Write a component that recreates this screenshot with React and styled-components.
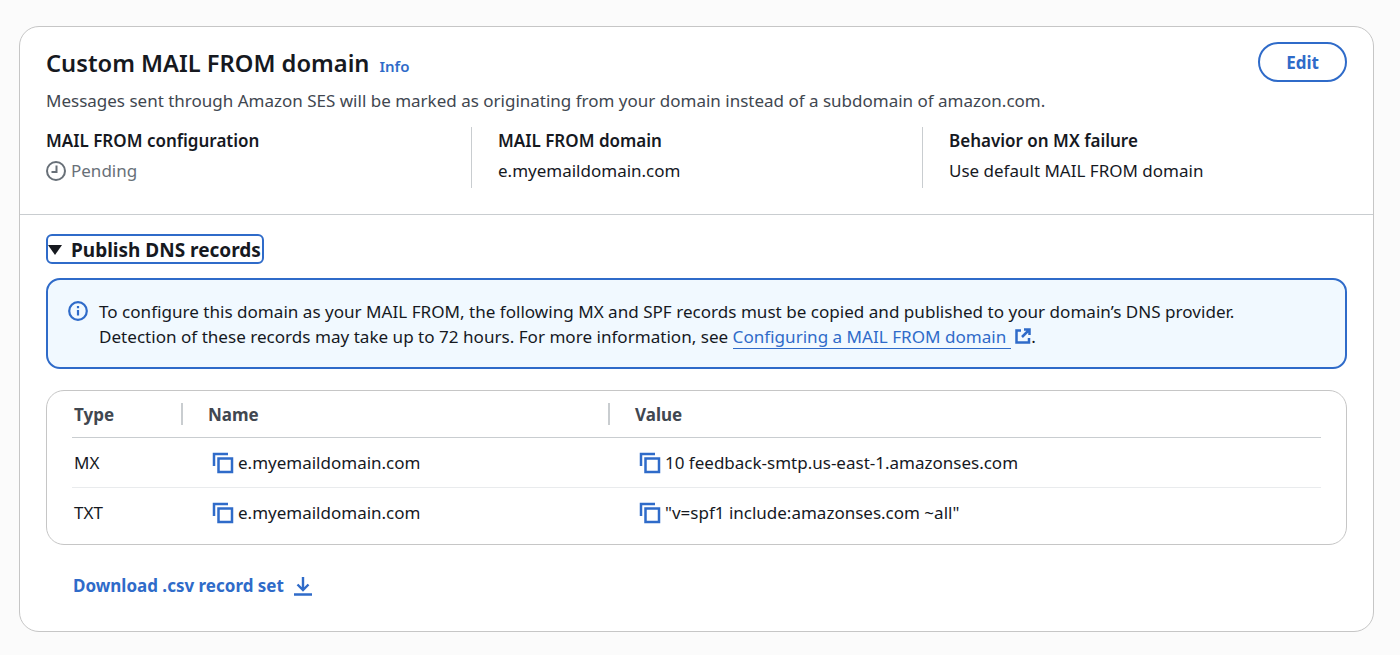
import React from "react";
import styled, { createGlobalStyle } from "styled-components";

const GlobalStyle = createGlobalStyle`
  html, body {
    margin: 0;
    padding: 0;
    background: #fbfbfb;
    font-family: "Noto Sans", "Open Sans", sans-serif;
    color: #16191f;
  }
`;

const blue = "#2f6bc9";

const Page = styled.div`
  width: 1400px;
  height: 655px;
  padding: 26px 26px 0 19px;
  box-sizing: border-box;
  overflow: hidden;
`;

const Card = styled.section`
  width: 1355px;
  height: 606px;
  box-sizing: border-box;
  background: #fff;
  border: 1.5px solid #c6c6c6;
  border-radius: 20px;
`;

const Top = styled.header`
  height: 188px;
  box-sizing: border-box;
  padding: 15px 26px 0 26px;
  border-bottom: 1px solid #c9cdd0;
`;

const TitleRow = styled.div`
  display: flex;
  justify-content: space-between;
  align-items: flex-start;
`;

const TitleWrap = styled.div`
  display: flex;
  align-items: baseline;
  gap: 10px;
`;

const Title = styled.h2`
  margin: 0;
  font-size: 23.7px;
  line-height: 42px;
  font-weight: 600;
  color: #16191f;
`;

const InfoLink = styled.a`
  font-size: 15px;
  font-weight: 600;
  color: ${blue};
`;

const EditButton = styled.button`
  width: 89px;
  height: 40px;
  box-sizing: border-box;
  border: 2.5px solid ${blue};
  border-radius: 20px;
  background: #fff;
  color: ${blue};
  font-family: inherit;
  font-size: 17px;
  font-weight: 700;
`;

const Description = styled.p`
  margin: 5px 0 0;
  font-size: 17px;
  line-height: 24px;
  color: #414750;
`;

const Columns = styled.div`
  display: grid;
  grid-template-columns: 425px 451px 1fr;
  margin-top: 14px;
`;

const Column = styled.div`
  height: 61px;
  padding-left: ${({ $first }) => ($first ? "0" : "26px")};
  border-left: ${({ $first }) => ($first ? "0" : "1px solid #c9cdd0")};
`;

const Label = styled.div`
  font-size: 17px;
  line-height: 28px;
  font-weight: 600;
  color: #16191f;
`;

const Value = styled.div`
  display: flex;
  align-items: center;
  gap: 5px;
  font-size: 17px;
  line-height: 32px;
  color: ${({ $muted }) => ($muted ? "#687078" : "#16191f")};
`;

const Body = styled.div`
  padding: 19px 26px 0 26px;
`;

const Toggle = styled.div`
  display: inline-flex;
  align-items: center;
  gap: 8px;
  height: 30px;
  box-sizing: border-box;
  padding: 2px 0 0 0;
  width: 218px;
  border: 2px solid ${blue};
  border-radius: 6px;
  font-size: 19px;
  font-weight: 700;
  color: #16191f;
  white-space: nowrap;
`;

const Alert = styled.div`
  display: flex;
  gap: 11px;
  margin-top: 14px;
  height: 91px;
  box-sizing: border-box;
  padding: 19px 0 0 20px;
  border: 2px solid ${blue};
  border-radius: 14px;
  background: #f1f9ff;
`;

const AlertIcon = styled.span`
  flex: none;
  margin-top: 2px;
  height: 22px;
`;

const AlertText = styled.div`
  font-size: 17.08px;
  line-height: 25px;
  color: #16191f;
  white-space: nowrap;
`;

const DocLink = styled.a`
  color: ${blue};
  border-bottom: 1px solid ${blue};
  padding-right: 5px;
`;

const ExternalIcon = styled.svg`
  margin-left: 4px;
  vertical-align: -1px;
`;

const TableBox = styled.div`
  margin-top: 21px;
  height: 155px;
  box-sizing: border-box;
  padding: 0 25px;
  border: 1.5px solid #c6c6c6;
  border-radius: 18px;
`;

const Row = styled.div`
  display: grid;
  grid-template-columns: 128px 427px 1fr;
  height: ${({ $h }) => $h}px;
  align-items: center;
  border-bottom: ${({ $line }) => ($line ? `1px solid ${$line}` : "0")};
  font-size: 17px;
  color: #16191f;
`;

const Heading = styled.div`
  position: relative;
  height: 100%;
  display: flex;
  align-items: center;
  padding-left: ${({ $first }) => ($first ? "2px" : "8px")};
  font-weight: 700;
  color: #414750;

  &:not(:first-child)::before {
    content: "";
    position: absolute;
    left: -19px;
    top: 12px;
    height: 22px;
    width: 2px;
    background: #c9cdd0;
  }
`;

const Cell = styled.div`
  display: flex;
  align-items: center;
  gap: 3px;
  padding-left: ${({ $first }) => ($first ? "2px" : "13px")};
  white-space: nowrap;
`;

const CopySvg = styled.svg`
  margin-left: -1px;
  margin-right: 1px;
`;

const DownloadLink = styled.a`
  display: inline-flex;
  align-items: center;
  gap: 10px;
  margin: 29px 0 0 27px;
  font-size: 17px;
  font-weight: 700;
  color: ${blue};
`;

function CopyIcon() {
  return (
    <CopySvg width="22" height="22" viewBox="0 0 22 22" fill="none" stroke={blue} strokeWidth="2.5">
      <path d="M2 14V2h14" />
      <rect x="6.5" y="6.5" width="13.5" height="13.5" />
    </CopySvg>
  );
}

const rows = [
  { type: "MX", name: "e.myemaildomain.com", value: "10 feedback-smtp.us-east-1.amazonses.com", h: 49, line: "#e9ebed" },
  { type: "TXT", name: "e.myemaildomain.com", value: '"v=spf1 include:amazonses.com ~all"', h: 49 },
];

export default function App() {
  return (
    <Page>
      <GlobalStyle />
      <Card>
        <Top>
          <TitleRow>
            <TitleWrap>
              <Title>Custom MAIL FROM domain</Title>
              <InfoLink>Info</InfoLink>
            </TitleWrap>
            <EditButton>Edit</EditButton>
          </TitleRow>
          <Description>
            Messages sent through Amazon SES will be marked as originating from your domain instead of a subdomain of amazon.com.
          </Description>
          <Columns>
            <Column $first>
              <Label>MAIL FROM configuration</Label>
              <Value $muted>
                <svg width="20" height="20" viewBox="0 0 20 20" fill="none" stroke="#687078" strokeWidth="2">
                  <circle cx="10" cy="10" r="9" />
                  <path d="M10.5 4.5V11H5.5" />
                </svg>
                Pending
              </Value>
            </Column>
            <Column>
              <Label>MAIL FROM domain</Label>
              <Value>e.myemaildomain.com</Value>
            </Column>
            <Column>
              <Label>Behavior on MX failure</Label>
              <Value>Use default MAIL FROM domain</Value>
            </Column>
          </Columns>
        </Top>
        <Body>
          <Toggle>
            <svg width="15" height="12" viewBox="0 0 15 12">
              <path d="M0 1h14L7 11z" fill="#16191f" />
            </svg>
            Publish DNS records
          </Toggle>
          <Alert>
            <AlertIcon>
              <svg width="20" height="20" viewBox="0 0 20 20" fill="none" stroke={blue} strokeWidth="2.2">
                <circle cx="10" cy="10" r="8.8" />
                <path d="M10 9v5.5M10 5v2.2" />
              </svg>
            </AlertIcon>
            <AlertText>
              To configure this domain as your MAIL FROM, the following MX and SPF records must be copied and published to your domain’s DNS provider.
              <br />
              Detection of these records may take up to 72 hours. For more information, see <DocLink>Configuring a MAIL FROM domain</DocLink>
              <ExternalIcon width="16" height="16" viewBox="0 0 16 16" fill="none" stroke={blue} strokeWidth="2.5">
                <path d="M6 2.5H1.5v12H14V10M9 1.5h5.5V7M14.5 1.5L7 9" />
              </ExternalIcon>
              .
            </AlertText>
          </Alert>
          <TableBox>
            <Row $h={46} $line="#c9cdd0">
              <Heading $first>Type</Heading>
              <Heading>Name</Heading>
              <Heading>Value</Heading>
            </Row>
            {rows.map((row) => (
              <Row key={row.type} $h={row.h} $line={row.line}>
                <Cell $first>{row.type}</Cell>
                <Cell>
                  <CopyIcon />
                  {row.name}
                </Cell>
                <Cell>
                  <CopyIcon />
                  {row.value}
                </Cell>
              </Row>
            ))}
          </TableBox>
          <DownloadLink>
            Download .csv record set
            <svg width="18" height="20" viewBox="0 0 18 20" fill="none" stroke={blue} strokeWidth="2.4">
              <path d="M9 1v13M3.5 8.5L9 14l5.5-5.5M0 18.5h18" />
            </svg>
          </DownloadLink>
        </Body>
      </Card>
    </Page>
  );
}
